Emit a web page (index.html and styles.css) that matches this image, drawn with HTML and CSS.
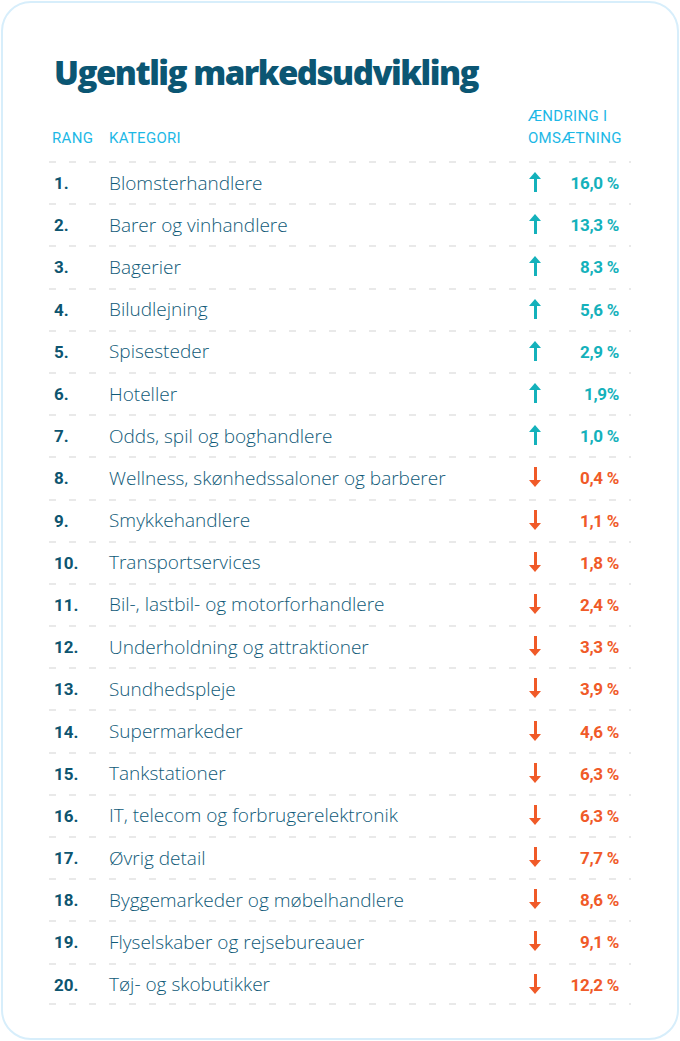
FILE: index.html
```html
<!DOCTYPE html>
<html lang="da">
<head>
<meta charset="utf-8">
<title>Ugentlig markedsudvikling</title>
<link rel="stylesheet" href="styles.css">
</head>
<body>
<div class="card">
  <h1 class="title">Ugentlig markedsudvikling</h1>
  <div class="table">
    <div class="head">
      <div class="h-rank">RANG</div>
      <div class="h-cat">KATEGORI</div>
      <div class="h-chg">ÆNDRING I<br>OMSÆTNING</div>
    </div>
    <div class="row up"><span class="rank">1.</span><span class="cat">Blomsterhandlere</span><span class="arrow"></span><span class="pct">16,0 %</span></div>
    <div class="row up"><span class="rank">2.</span><span class="cat">Barer og vinhandlere</span><span class="arrow"></span><span class="pct">13,3 %</span></div>
    <div class="row up"><span class="rank">3.</span><span class="cat">Bagerier</span><span class="arrow"></span><span class="pct">8,3 %</span></div>
    <div class="row up"><span class="rank">4.</span><span class="cat">Biludlejning</span><span class="arrow"></span><span class="pct">5,6 %</span></div>
    <div class="row up"><span class="rank">5.</span><span class="cat">Spisesteder</span><span class="arrow"></span><span class="pct">2,9 %</span></div>
    <div class="row up"><span class="rank">6.</span><span class="cat">Hoteller</span><span class="arrow"></span><span class="pct">1,9%</span></div>
    <div class="row up"><span class="rank">7.</span><span class="cat">Odds, spil og boghandlere</span><span class="arrow"></span><span class="pct">1,0 %</span></div>
    <div class="row down"><span class="rank">8.</span><span class="cat">Wellness, skønhedssaloner og barberer</span><span class="arrow"></span><span class="pct">0,4 %</span></div>
    <div class="row down"><span class="rank">9.</span><span class="cat">Smykkehandlere</span><span class="arrow"></span><span class="pct">1,1 %</span></div>
    <div class="row down"><span class="rank">10.</span><span class="cat">Transportservices</span><span class="arrow"></span><span class="pct">1,8 %</span></div>
    <div class="row down"><span class="rank">11.</span><span class="cat">Bil-, lastbil- og motorforhandlere</span><span class="arrow"></span><span class="pct">2,4 %</span></div>
    <div class="row down"><span class="rank">12.</span><span class="cat">Underholdning og attraktioner</span><span class="arrow"></span><span class="pct">3,3 %</span></div>
    <div class="row down"><span class="rank">13.</span><span class="cat">Sundhedspleje</span><span class="arrow"></span><span class="pct">3,9 %</span></div>
    <div class="row down"><span class="rank">14.</span><span class="cat">Supermarkeder</span><span class="arrow"></span><span class="pct">4,6 %</span></div>
    <div class="row down"><span class="rank">15.</span><span class="cat">Tankstationer</span><span class="arrow"></span><span class="pct">6,3 %</span></div>
    <div class="row down"><span class="rank">16.</span><span class="cat">IT, telecom og forbrugerelektronik</span><span class="arrow"></span><span class="pct">6,3 %</span></div>
    <div class="row down"><span class="rank">17.</span><span class="cat">Øvrig detail</span><span class="arrow"></span><span class="pct">7,7 %</span></div>
    <div class="row down"><span class="rank">18.</span><span class="cat">Byggemarkeder og møbelhandlere</span><span class="arrow"></span><span class="pct">8,6 %</span></div>
    <div class="row down"><span class="rank">19.</span><span class="cat">Flyselskaber og rejsebureauer</span><span class="arrow"></span><span class="pct">9,1 %</span></div>
    <div class="row down last"><span class="rank">20.</span><span class="cat">Tøj- og skobutikker</span><span class="arrow"></span><span class="pct">12,2 %</span></div>
  </div>
</div>
</body>
</html>
```

FILE: styles.css
```css
* { box-sizing: border-box; }
html, body { margin: 0; padding: 0; background: #ffffff; }
body { font-family: "Roboto", "DejaVu Sans", sans-serif; }

.card {
  margin: 1px;
  width: 678px;
  height: 1039px;
  border: 2px solid #d7eefb;
  border-radius: 30px;
  padding: 0 46px 0 46px;
  background: #fff;
}

.title {
  margin: 48px 0 0 5px;
  font-family: "Open Sans", "DejaVu Sans", sans-serif;
  font-weight: 800;
  font-size: 33px;
  line-height: 44px;
  letter-spacing: -1.5px;
  color: #0b5673;
}

.table { margin-top: 10px; }

.head {
  display: grid;
  grid-template-columns: 61px 1fr 103px;
  align-items: end;
  color: #1db8e6;
  font-size: 15px;
  line-height: 22px;
  font-weight: 400;
  letter-spacing: 0.3px;
  padding-bottom: 12px;
}
.h-rank { padding-left: 3px; }
.h-cat { margin-left: -1px; }

.row {
  display: grid;
  grid-template-columns: 61px 1fr 30px 72px;
  align-items: center;
  height: 42.2px;
  background-image: linear-gradient(to right, #e9e9e9 7px, transparent 7px);
  background-size: 20px 2px;
  background-repeat: repeat-x;
  background-position: 0 0;
}
.row.last {
  background-image: linear-gradient(to right, #e9e9e9 7px, transparent 7px), linear-gradient(to right, #e9e9e9 7px, transparent 7px);
  background-size: 20px 2px, 20px 2px;
  background-position: 0 0, 0 100%;
  background-repeat: repeat-x, repeat-x;
}

.rank {
  padding-left: 5px;
  font-weight: 700;
  font-size: 17px;
  color: #0d5570;
  padding-top: 2px;
}
.cat {
  font-family: "Open Sans", "DejaVu Sans", sans-serif;
  font-weight: 300;
  font-size: 19px;
  color: #0f5a78;
  margin-left: -1px;
  padding-top: 1px;
}
.pct {
  text-align: right;
  font-weight: 700;
  font-size: 17px;
  letter-spacing: -0.3px;
  padding-right: 12px;
  padding-top: 2px;
}
.up .pct { color: #14b1bb; }
.down .pct { color: #f05a28; }

.arrow {
  position: relative;
  width: 12px;
  height: 20px;
  justify-self: start;
}
.arrow::before {
  content: "";
  position: absolute;
  left: 5px;
  width: 3px;
  background: currentColor;
}
.arrow::after {
  content: "";
  position: absolute;
  left: 0;
  width: 0;
  height: 0;
  border-left: 6.5px solid transparent;
  border-right: 6.5px solid transparent;
}
.up .arrow { color: #14b1bb; }
.up .arrow::before { top: 6px; bottom: 0; }
.up .arrow::after { top: 0; border-bottom: 7px solid #14b1bb; }
.down .arrow { color: #f05a28; }
.down .arrow::before { top: 0; bottom: 6px; }
.down .arrow::after { bottom: 0; border-top: 7px solid #f05a28; }
```
